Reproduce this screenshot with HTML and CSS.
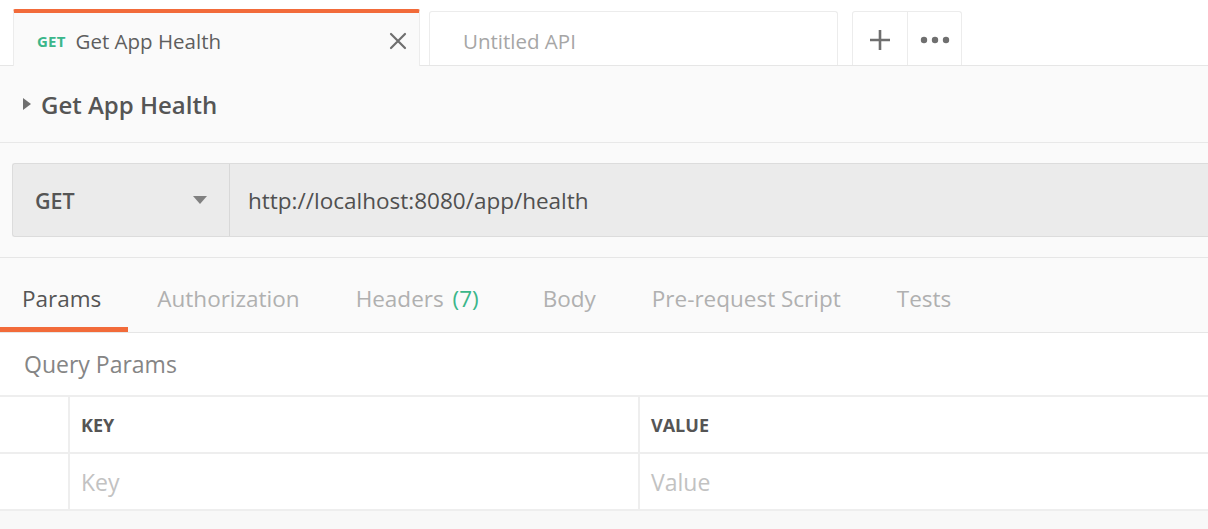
FILE: index.html
```html
<!DOCTYPE html>
<html lang="en">
<head>
<meta charset="utf-8">
<title>Get App Health</title>
<link rel="stylesheet" href="styles.css">
</head>
<body>
<div class="app">
  <header class="tabbar">
    <div class="tab tab-active">
      <span class="tab-method">GET</span>
      <span class="tab-name">Get App Health</span>
      <svg class="tab-close" width="18" height="18" viewBox="0 0 18 18" aria-hidden="true">
        <path d="M2 2 L16 16 M16 2 L2 16" stroke="#6f6f6f" stroke-width="2.2" stroke-linecap="round" fill="none"/>
      </svg>
    </div>
    <div class="tab tab-inactive">
      <span class="tab-name tab-name-muted">Untitled API</span>
    </div>
    <div class="tab-actions">
      <div class="tab-btn">
        <svg width="24" height="24" viewBox="0 0 24 24" aria-hidden="true">
          <path d="M12 2 V22 M2 12 H22" stroke="#6f6f6f" stroke-width="2.6" fill="none"/>
        </svg>
      </div>
      <div class="tab-btn">
        <svg width="30" height="8" viewBox="0 0 30 8" aria-hidden="true">
          <circle cx="4" cy="4" r="3.2" fill="#6f6f6f"/>
          <circle cx="15" cy="4" r="3.2" fill="#6f6f6f"/>
          <circle cx="26" cy="4" r="3.2" fill="#6f6f6f"/>
        </svg>
      </div>
    </div>
  </header>

  <section class="title-bar">
    <svg class="title-caret" width="8" height="12" viewBox="0 0 8 12" aria-hidden="true">
      <path d="M0 0 L8 6 L0 12 Z" fill="#707070"/>
    </svg>
    <h1 class="title">Get App Health</h1>
  </section>

  <section class="url-section">
    <div class="url-bar">
      <div class="method-select">
        <span class="method-label">GET</span>
        <svg width="14" height="8" viewBox="0 0 14 8" aria-hidden="true">
          <path d="M0 0 H14 L7 8 Z" fill="#808080"/>
        </svg>
      </div>
      <div class="url-input">http://localhost:8080/app/health</div>
    </div>
  </section>

  <nav class="req-tabs">
    <div class="req-tab req-tab-active">Params</div>
    <div class="req-tab">Authorization</div>
    <div class="req-tab">Headers <span class="req-count">(7)</span></div>
    <div class="req-tab">Body</div>
    <div class="req-tab">Pre-request Script</div>
    <div class="req-tab">Tests</div>
  </nav>

  <section class="params">
    <div class="params-title">Query Params</div>
    <div class="kv-table">
      <div class="kv-row kv-head">
        <div class="kv-cell kv-check"></div>
        <div class="kv-cell">KEY</div>
        <div class="kv-cell">VALUE</div>
      </div>
      <div class="kv-row">
        <div class="kv-cell kv-check"></div>
        <div class="kv-cell kv-placeholder">Key</div>
        <div class="kv-cell kv-placeholder">Value</div>
      </div>
    </div>
  </section>

  <div class="filler"></div>
</div>
</body>
</html>
```

FILE: styles.css
```css
* {
  box-sizing: border-box;
}

html, body {
  margin: 0;
  padding: 0;
  height: 100%;
}

body {
  font-family: "Open Sans", "Noto Sans", "Liberation Sans", sans-serif;
  background: #f8f8f8;
  color: #505050;
  overflow: hidden;
}

.app {
  display: flex;
  flex-direction: column;
  width: 1208px;
  height: 529px;
}

/* ---------- top tab bar ---------- */
.tabbar {
  display: flex;
  align-items: flex-end;
  height: 66px;
  padding-left: 13px;
  background: #ffffff;
  border-bottom: 1px solid #e6e6e6;
  flex-shrink: 0;
}

.tab {
  display: flex;
  align-items: center;
}

.tab-active {
  width: 407px;
  height: 57px;
  margin-bottom: -1px;
  padding: 2px 12px 0 23px;
  background: #fafafa;
  border-top: 4px solid #f26b3a;
  border-left: 1px solid #ececec;
  border-right: 1px solid #ececec;
  border-radius: 2px 2px 0 0;
}

.tab-method {
  font-size: 15px;
  font-weight: 700;
  color: #3bb68a;
  letter-spacing: 0.2px;
}

.tab-name {
  margin-left: 10px;
  font-size: 20.5px;
  color: #5e5e5e;
  flex: 1;
  white-space: nowrap;
}

.tab-name-muted {
  margin-left: 0;
  color: #a6a6a6;
}

.tab-close {
  flex-shrink: 0;
}

.tab-inactive {
  width: 409px;
  height: 54px;
  margin-left: 9px;
  padding: 4px 0 0 33px;
  background: #ffffff;
  border: 1px solid #ececec;
  border-bottom: none;
  border-radius: 3px 3px 0 0;
}

.tab-actions {
  display: flex;
  height: 54px;
  margin-left: 14px;
  border: 1px solid #ececec;
  border-bottom: none;
  border-radius: 3px 3px 0 0;
}

.tab-btn {
  display: flex;
  align-items: center;
  justify-content: center;
  width: 54px;
  padding-top: 2px;
}

.tab-btn + .tab-btn {
  border-left: 1px solid #ececec;
}

/* ---------- title ---------- */
.title-bar {
  display: flex;
  align-items: center;
  height: 77px;
  padding-left: 23px;
  background: #fafafa;
  border-bottom: 1px solid #e8e8e8;
  flex-shrink: 0;
}

.title-caret {
  margin-right: 10px;
}

.title {
  margin: 0;
  font-size: 24px;
  font-weight: 600;
  color: #555555;
}

/* ---------- url bar ---------- */
.url-section {
  padding: 20px 0 20px 12px;
  background: #fafafa;
  border-bottom: 1px solid #e6e6e6;
  flex-shrink: 0;
}

.url-bar {
  display: flex;
  height: 74px;
  background: #ebebeb;
  border: 1px solid #dcdcdc;
  border-right: none;
  border-radius: 3px 0 0 3px;
}

.method-select {
  display: flex;
  align-items: center;
  justify-content: space-between;
  width: 217px;
  padding: 0 22px 0 22px;
  border-right: 1px solid #d8d8d8;
}

.method-label {
  font-size: 21.5px;
  font-weight: 600;
  color: #555555;
}

.url-input {
  display: flex;
  align-items: center;
  padding-left: 18px;
  font-size: 22.5px;
  color: #505050;
}

/* ---------- request tabs ---------- */
.req-tabs {
  display: flex;
  gap: 7px;
  height: 75px;
  background: #fafafa;
  border-bottom: 1px solid #e6e6e6;
  flex-shrink: 0;
}

.req-tab {
  display: flex;
  align-items: center;
  padding: 12px 27px 0 22px;
  font-size: 22.5px;
  color: #b0b0b0;
  border-bottom: 5px solid transparent;
  white-space: pre;
}

.req-tab-active {
  color: #555555;
  border-bottom-color: #f26b3a;
}

.req-count {
  margin-left: 3px;
  margin-right: 8px;
  color: #3bb68a;
}

/* ---------- params ---------- */
.params {
  background: #ffffff;
  flex-shrink: 0;
}

.params-title {
  display: flex;
  align-items: center;
  height: 62px;
  padding-left: 24px;
  font-size: 23px;
  color: #858585;
}

.kv-table {
  border-top: 2px solid #eeeeee;
}

.kv-row {
  display: grid;
  grid-template-columns: 68px 1fr 1fr;
  height: 57px;
  border-bottom: 2px solid #eeeeee;
}

.kv-cell {
  display: flex;
  align-items: center;
  padding-left: 11px;
  border-left: 2px solid #eeeeee;
}

.kv-check {
  border-left: none;
}

.kv-head .kv-cell {
  font-size: 18px;
  font-weight: 700;
  color: #555555;
}

.kv-placeholder {
  font-size: 23px;
  color: #c2c2c2;
}

.filler {
  flex: 1;
  background: #f8f8f8;
}
```
